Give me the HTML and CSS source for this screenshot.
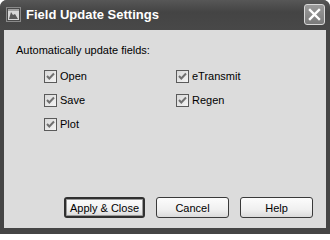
FILE: index.html
```html
<!DOCTYPE html>
<html>
<head>
<meta charset="utf-8">
<link rel="stylesheet" href="styles.css">
</head>
<body>
<div class="window">
  <div class="titlebar">
    <svg class="app-icon" width="15" height="15" viewBox="0 0 15 15">
      <rect x="0.5" y="0.5" width="14" height="14" fill="#4a4a4a" stroke="#8a8a8a"/>
      <rect x="2" y="4" width="11" height="9" fill="#d8d8d8"/>
      <path d="M3 12 L5 5 L7 8 L9 7 L12 12 Z" fill="#5a5a5a"/>
      <rect x="2" y="2" width="11" height="2" fill="#a0a0a0"/>
    </svg>
    <span class="title">Field Update Settings</span>
    <div class="close">
      <svg width="13" height="13" viewBox="0 0 13 13">
        <path d="M2 2 L11 11 M11 2 L2 11" stroke="#ffffff" stroke-width="2.4" stroke-linecap="square"/>
      </svg>
    </div>
  </div>
  <div class="client">
    <div class="heading">Automatically update fields:</div>
    <div class="options">
      <label class="opt"><span class="box"><svg width="11" height="11" viewBox="0 0 11 11"><path d="M2 5 L4.3 7.5 L9 2.5" fill="none" stroke="#707070" stroke-width="2"/></svg></span>Open</label>
      <label class="opt"><span class="box"><svg width="11" height="11" viewBox="0 0 11 11"><path d="M2 5 L4.3 7.5 L9 2.5" fill="none" stroke="#707070" stroke-width="2"/></svg></span>eTransmit</label>
      <label class="opt"><span class="box"><svg width="11" height="11" viewBox="0 0 11 11"><path d="M2 5 L4.3 7.5 L9 2.5" fill="none" stroke="#707070" stroke-width="2"/></svg></span>Save</label>
      <label class="opt"><span class="box"><svg width="11" height="11" viewBox="0 0 11 11"><path d="M2 5 L4.3 7.5 L9 2.5" fill="none" stroke="#707070" stroke-width="2"/></svg></span>Regen</label>
      <label class="opt"><span class="box"><svg width="11" height="11" viewBox="0 0 11 11"><path d="M2 5 L4.3 7.5 L9 2.5" fill="none" stroke="#707070" stroke-width="2"/></svg></span>Plot</label>
    </div>
    <div class="buttons">
      <button class="btn default">Apply &amp; Close</button>
      <button class="btn">Cancel</button>
      <button class="btn">Help</button>
    </div>
  </div>
</div>
</body>
</html>
```
FILE: styles.css
```css
html, body {
  margin: 0;
  padding: 0;
  background: #ffffff;
}
.window {
  width: 330px;
  height: 234px;
  box-sizing: border-box;
  background: #454545;
  border-radius: 7px 7px 0 0;
  display: flex;
  flex-direction: column;
  font-family: "Liberation Sans", Arial, sans-serif;
}
.titlebar {
  height: 30px;
  flex: none;
  display: flex;
  align-items: center;
  padding: 0 5px 0 6px;
  background: linear-gradient(#575757, #444444 40%, #484848);
  border-radius: 7px 7px 0 0;
  box-sizing: border-box;
}
.app-icon {
  flex: none;
  margin-top: -2px;
}
.title {
  margin-left: 5px;
  color: #ffffff;
  font-weight: bold;
  font-size: 13px;
  flex: 1;
  margin-top: -1px;
}
.close {
  width: 21px;
  height: 21px;
  box-sizing: border-box;
  border: 1px solid #d8d8d8;
  border-radius: 3px;
  background: linear-gradient(#9a9a9a, #7a7a7a);
  display: flex;
  align-items: center;
  justify-content: center;
  margin-top: -1px;
}
.client {
  flex: 1;
  margin: 0 4px 6px 4px;
  background: #dcdcdc;
  display: flex;
  flex-direction: column;
  padding: 14px 13px 10px 12px;
  font-size: 11px;
  color: #000000;
}
.heading {
  line-height: 13px;
}
.options {
  display: grid;
  grid-template-columns: 132px auto;
  grid-auto-rows: 24px;
  margin: 13px 0 0 28px;
}
.opt {
  display: flex;
  align-items: flex-start;
  line-height: 13px;
  gap: 3px;
}
.box {
  width: 13px;
  height: 13px;
  box-sizing: border-box;
  border: 1px solid #5a5a5a;
  background: linear-gradient(135deg, #d8d8d8, #f4f4f4);
  display: flex;
  align-items: center;
  justify-content: center;
  flex: none;
}
.buttons {
  margin-top: auto;
  display: flex;
  justify-content: flex-end;
  gap: 11px;
}
.btn {
  width: 73px;
  height: 21px;
  box-sizing: border-box;
  border: 1px solid #3a3a3a;
  border-radius: 3px;
  background: linear-gradient(#fcfcfc, #f0f0f0 60%, #dadada);
  font-family: "Liberation Sans", Arial, sans-serif;
  font-size: 11px;
  color: #000000;
  padding: 0;
}
.default {
  width: 81px;
  border: 2px solid #303030;
  box-shadow: inset 0 0 0 1px #9a9a9a;
}
```
